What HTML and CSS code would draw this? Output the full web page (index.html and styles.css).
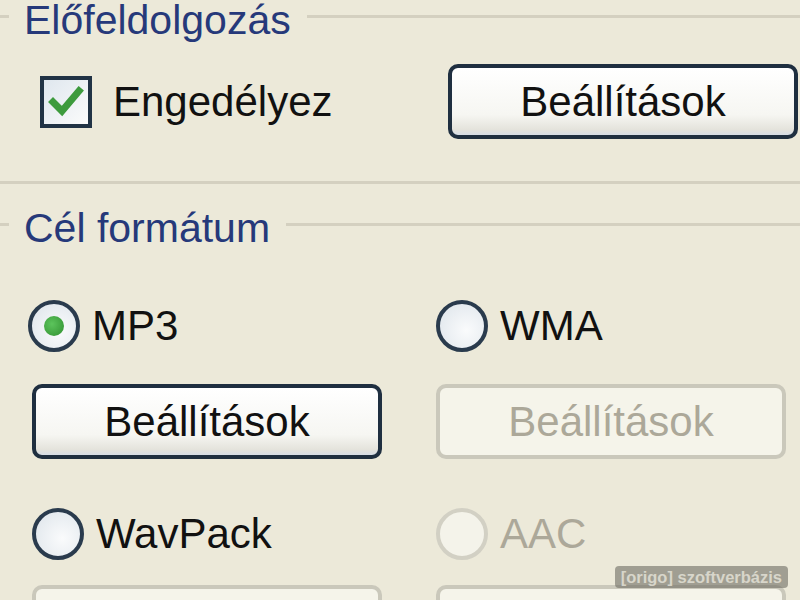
FILE: index.html
```html
<!DOCTYPE html>
<html lang="hu">
<head>
    <meta charset="UTF-8">
    <title>Előfeldolgozás</title>
    <link rel="stylesheet" href="styles.css">
</head>
<body>
<div class="dialog">
    <div class="group-head">
        <span class="edge"></span>
        <span class="group-title">Előfeldolgozás</span>
        <span class="line"></span>
    </div>
    <div class="pre-row">
        <label class="check-label">
            <span class="checkbox">
                <svg width="44" height="44" viewBox="0 0 44 44">
                    <path d="M9 22 L18 31 L35 11" fill="none" stroke="#3d9b3d" stroke-width="7" stroke-linecap="square"/>
                </svg>
            </span>
            <span class="text">Engedélyez</span>
        </label>
        <button class="btn">Beállítások</button>
    </div>
    <div class="separator"></div>

    <div class="group-head second">
        <span class="edge"></span>
        <span class="group-title">Cél formátum</span>
        <span class="line"></span>
    </div>
    <div class="formats">
        <label class="radio-label first">
            <span class="radio checked"><span class="dot"></span></span>
            <span class="text">MP3</span>
        </label>
        <label class="radio-label first">
            <span class="radio"></span>
            <span class="text">WMA</span>
        </label>
        <button class="btn">Beállítások</button>
        <button class="btn" disabled>Beállítások</button>
        <label class="radio-label">
            <span class="radio"></span>
            <span class="text">WavPack</span>
        </label>
        <label class="radio-label off">
            <span class="radio"></span>
            <span class="text">AAC</span>
        </label>
        <button class="btn" disabled></button>
        <button class="btn" disabled></button>
    </div>
</div>
<div class="watermark">[origo] szoftverbázis</div>
</body>
</html>
```

FILE: styles.css
```css
html, body{
    margin: 0;
    height: 100%;
}
body{
    background: #ece9d9;
    overflow: hidden;
    font-family: "Liberation Sans", Arial, sans-serif;
    font-size: 42px;
    color: #111;
}
.dialog{
    width: 800px;
}
.group-head{
    display: flex;
    height: 40px;
    line-height: 40px;
}
.group-head.second{
    margin-top: 24px;
}
.group-head .edge,
.group-head .line{
    height: 3px;
    margin-top: 15px;
    background: #d4d0c0;
}
.group-head .edge{
    width: 9px;
}
.group-head .line{
    flex: 1;
}
.group-title{
    padding: 0 16px 0 15px;
    color: #26397a;
    font-size: 41px;
    white-space: nowrap;
}
.pre-row{
    display: flex;
    align-items: center;
    margin-top: 24px;
    padding-left: 40px;
}
.check-label{
    display: flex;
    align-items: center;
    width: 408px;
}
.checkbox{
    width: 44px;
    height: 44px;
    border: 4px solid #213345;
    background: linear-gradient(135deg, #dfe7ee, #fbfbfb);
    margin-right: 21px;
}
.checkbox svg{
    display: block;
}
.btn{
    width: 350px;
    height: 75px;
    border: 4px solid #1f2f40;
    border-radius: 10px;
    background: linear-gradient(#ffffff, #f6f6f2 70%, #e4e3dc 92%, #d6dde6);
    font-family: inherit;
    font-size: 42px;
    color: #111;
    padding: 0;
}
.btn[disabled]{
    border-color: #cac8bb;
    background: #f5f4ea;
    color: #aca899;
}
.separator{
    height: 3px;
    margin-top: 42px;
    background: #d4d0c0;
}
.formats{
    display: grid;
    grid-template-columns: 404px 354px;
    margin-top: 52px;
    padding-left: 32px;
}
.radio-label{
    display: flex;
    align-items: center;
    height: 52px;
}
.radio-label.first{
    margin-bottom: 32px;
}
.formats .btn{
    margin-bottom: 49px;
}
.formats .radio-label:not(.first){
    margin-bottom: 25px;
}
.formats .first:first-child{
    margin-left: -4px;
}
.radio{
    width: 44px;
    height: 44px;
    border: 4px solid #2a3b4d;
    border-radius: 50%;
    background: radial-gradient(circle at 60% 60%, #fafbfc, #dde4ea);
    margin-right: 12px;
    display: flex;
    align-items: center;
    justify-content: center;
}
.radio .dot{
    width: 20px;
    height: 20px;
    border-radius: 50%;
    background: radial-gradient(circle at 40% 40%, #5cc45c, #2f8f2f);
}
.radio-label.off .radio{
    border-color: #d2d0c4;
    background: #f4f3ea;
}
.radio-label.off .text{
    color: #aca899;
}
.watermark{
    position: absolute;
    right: 12px;
    bottom: 12px;
    padding: 0 6px;
    height: 22px;
    line-height: 22px;
    border-radius: 4px;
    background: rgba(110, 108, 98, 0.6);
    color: rgba(235, 233, 222, 0.75);
    font-family: "Liberation Sans", Arial, sans-serif;
    font-weight: bold;
    font-size: 16.5px;
}
```
